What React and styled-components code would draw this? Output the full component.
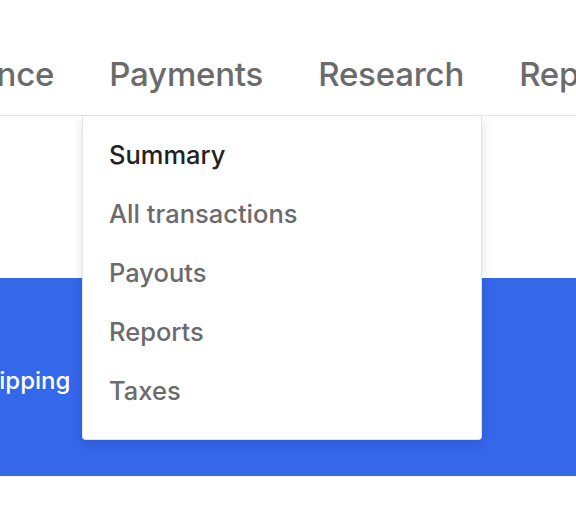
import React from "react";
import styled, { createGlobalStyle } from "styled-components";

const GlobalStyle = createGlobalStyle`
  html, body {
    margin: 0;
    padding: 0;
    background: #ffffff;
  }
  body {
    font-family: Inter, "Noto Sans", Arial, sans-serif;
    overflow: hidden;
  }
`;

const Page = styled.div`
  position: relative;
  width: 576px;
  height: 506px;
  overflow: hidden;
`;

const NavBar = styled.nav`
  height: 116px;
  box-sizing: border-box;
  padding-top: 33px;
  border-bottom: 1px solid #e6e6e6;
  display: flex;
  align-items: center;
  overflow: hidden;
`;

const NavList = styled.ul`
  list-style: none;
  margin: 0 0 0 -69px;
  padding: 0;
  display: flex;
  gap: 55px;
  white-space: nowrap;
`;

const NavItem = styled.li`
  font-size: 33px;
  font-weight: 500;
  color: #6b6b6b;
  letter-spacing: -0.2px;
`;

const Content = styled.div`
  padding-top: 162px;
`;

const Band = styled.section`
  height: 198px;
  background: #3567eb;
  display: flex;
  align-items: center;
  overflow: hidden;
`;

const BandText = styled.p`
  margin: 0 0 0 -85px;
  color: #ffffff;
  font-size: 24px;
  font-weight: 500;
  white-space: nowrap;
  transform: translateY(3px);
`;

const Dropdown = styled.ul`
  position: absolute;
  top: 116px;
  left: 82px;
  width: 400px;
  height: 324px;
  box-sizing: border-box;
  margin: 0;
  padding: 21px 0 0 26px;
  list-style: none;
  background: #ffffff;
  border: 1px solid #e4e4e4;
  border-top: none;
  border-radius: 0 0 4px 4px;
  box-shadow: 0 4px 12px rgba(0, 0, 0, 0.12);
`;

const MenuItem = styled.li`
  height: 59px;
  line-height: 36px;
  font-size: 25.5px;
  font-weight: 500;
  letter-spacing: 0;
  color: ${(p) => (p.$active ? "#222222" : "#6b6b6b")};
`;

const items = ["Summary", "All transactions", "Payouts", "Reports", "Taxes"];

export default function App() {
  return (
    <Page>
      <GlobalStyle />
      <NavBar>
        <NavList>
          <NavItem>Finance</NavItem>
          <NavItem>Payments</NavItem>
          <NavItem>Research</NavItem>
          <NavItem>Reports</NavItem>
        </NavList>
      </NavBar>
      <Content>
        <Band>
          <BandText>Free shipping</BandText>
        </Band>
      </Content>
      <Dropdown>
        {items.map((label, i) => (
          <MenuItem key={label} $active={i === 0}>
            {label}
          </MenuItem>
        ))}
      </Dropdown>
    </Page>
  );
}
